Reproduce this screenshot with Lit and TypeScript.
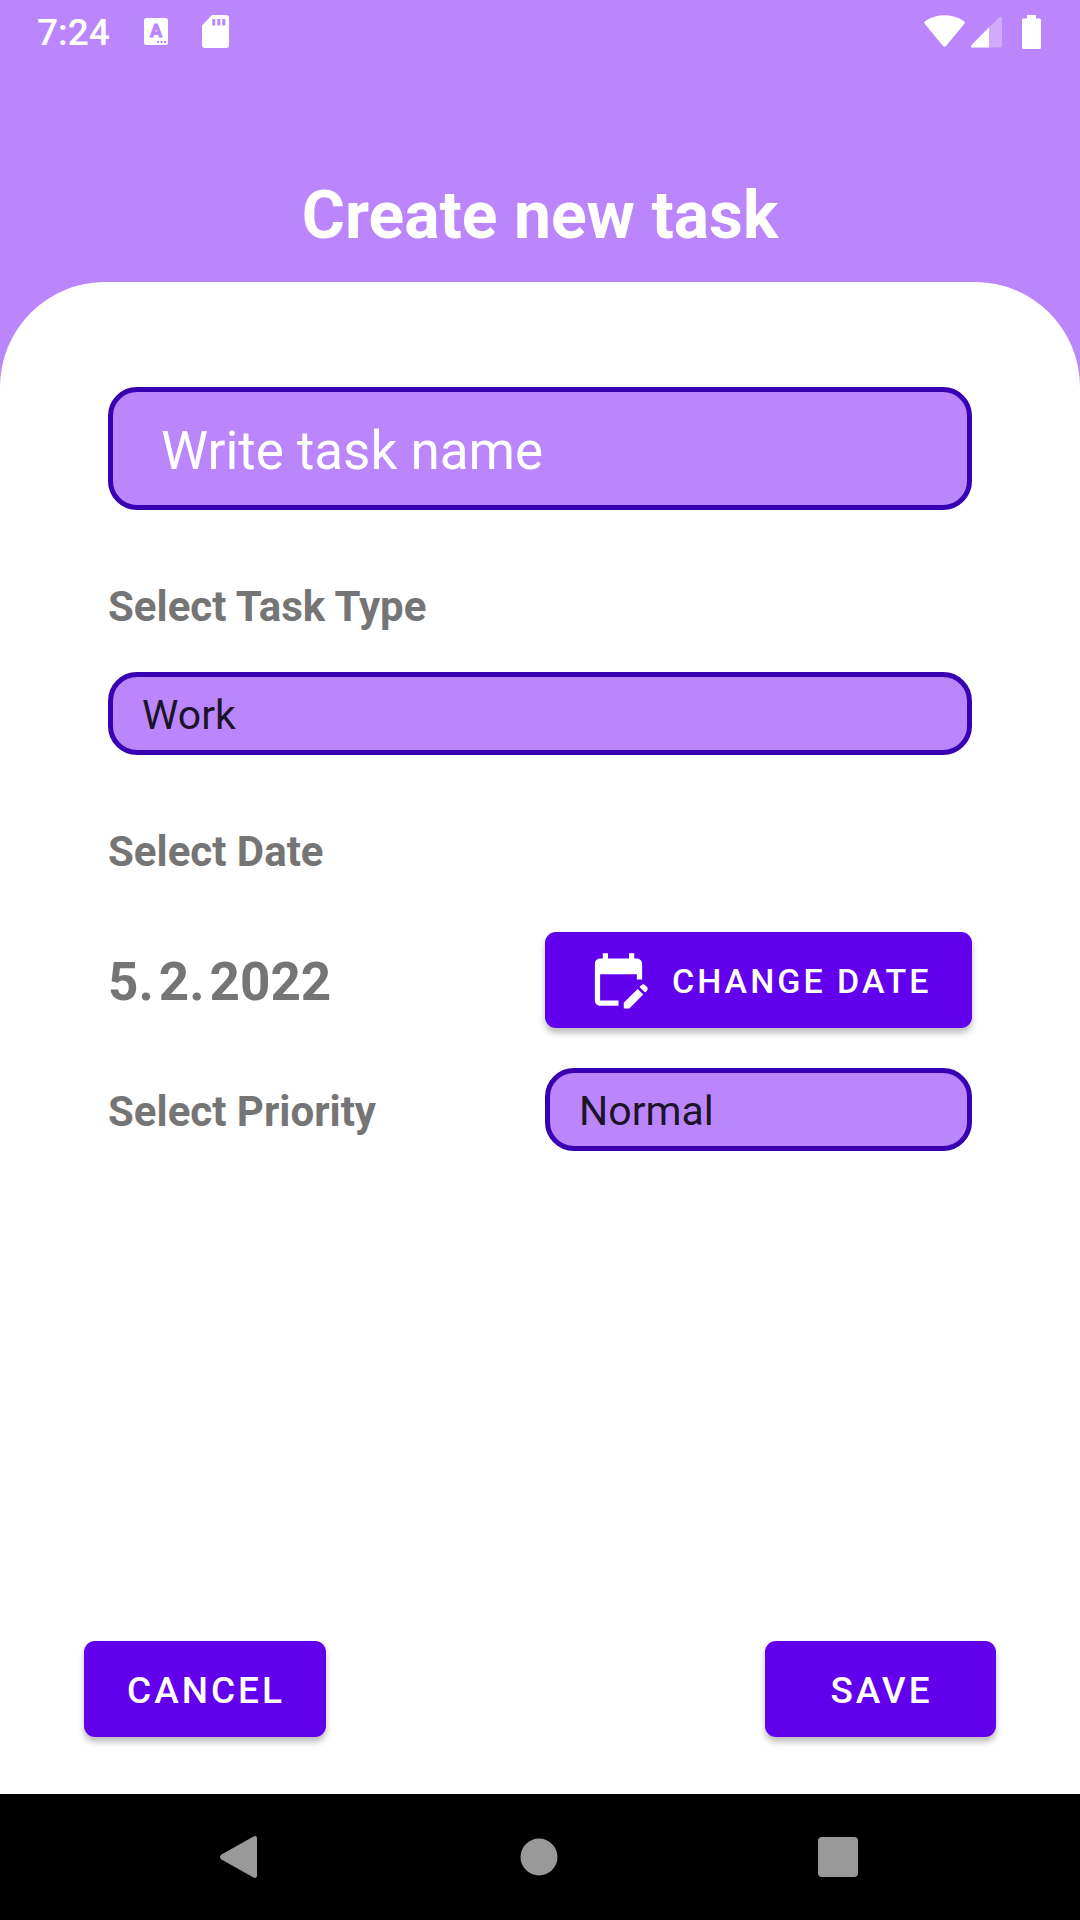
import { LitElement, html, css } from "lit";
import { customElement, state } from "lit/decorators.js";

const TASK_TYPES = ["Work", "School", "Home", "Hobby"];
const PRIORITIES = ["Low", "Normal", "High"];

@customElement("status-bar")
class StatusBar extends LitElement {
  static styles = css`
    :host {
      display: flex;
      align-items: center;
      justify-content: space-between;
      height: 63px;
      padding: 0 39px 0 37px;
      color: #fff;
    }
    .group {
      display: flex;
      align-items: center;
      gap: 34px;
    }
    .system {
      gap: 20px;
    }
    .network {
      display: flex;
      gap: 6px;
    }
    .clock {
      padding-top: 3px;
      font-size: 37px;
      line-height: 44px;
      font-weight: 500;
    }
    svg {
      display: block;
      fill: currentColor;
    }
    .letter {
      font: 700 18px Roboto, sans-serif;
      fill: #bb86fc;
      stroke: #bb86fc;
      stroke-width: 1;
    }
  `;

  render() {
    return html`
      <div class="group">
        <time class="clock">7:24</time>
        <svg width="24" height="27" viewBox="0 0 24 27" aria-hidden="true">
          <rect width="24" height="27" rx="2.5" />
          <text class="letter" x="12" y="19" text-anchor="middle">A</text>
          <path d="M13 23h2v2h-2zM16.500 23h2v2h-2zM20 23h2v2h-2z" fill="#bb86fc" />
        </svg>
        <svg width="27" height="33" viewBox="0 0 27 33" aria-hidden="true">
          <path
            fill-rule="evenodd"
            d="M10 0H24a3 3 0 0 1 3 3V30a3 3 0 0 1-3 3H3a3 3 0 0 1-3-3V10.500zM10.300 4v6.500h3V4zM15.300 4v6.500h3V4zM20.300 4v6.500h3V4z"
          />
        </svg>
      </div>
      <div class="group system">
        <div class="network">
          <svg width="41" height="33" viewBox="0 0 41 33" aria-hidden="true">
            <path
              d="M.7 8.800C-.1 7.900 0 6.900 1 6.200C7 2.200 13.500.3 20.500.3S34 2.200 40 6.200C41 6.900 41.100 7.900 40.300 8.800L22 31Q20.500 32.600 19 31z"
            />
          </svg>
          <svg width="31" height="33" viewBox="0 0 31 33" aria-hidden="true">
            <path
              d="M31 3.200V31a1.500 1.500 0 0 1-1.500 1.500H1.200C0 32.500-.4 31 .5 30L28.500 2Q31 .5 31 3.200z"
              opacity=".3"
            />
            <path d="M18 12.500V32.500H1.200C0 32.500-.4 31 .5 30z" />
          </svg>
        </div>
        <svg width="19" height="34" viewBox="0 0 19 34" aria-hidden="true">
          <path
            d="M5 0h9v3.500h3.500a1.500 1.500 0 0 1 1.500 1.500V32.500a1.500 1.500 0 0 1-1.500 1.500H1.500A1.500 1.500 0 0 1 0 32.500V5a1.500 1.500 0 0 1 1.500-1.500H5z"
          />
        </svg>
      </div>
    `;
  }
}

@customElement("navigation-bar")
class NavigationBar extends LitElement {
  static styles = css`
    :host {
      display: flex;
      align-items: center;
      justify-content: space-between;
      height: 126px;
      padding: 0 20%;
      background: #000;
    }
    .key {
      display: flex;
      padding: 0;
      border: 0;
      background: none;
      color: #999;
      cursor: pointer;
    }
    svg {
      display: block;
      fill: currentColor;
    }
  `;

  render() {
    return html`
      <button class="key" aria-label="Back">
        <svg width="44" height="44" viewBox="0 0 44 44">
          <path d="M37.500 1.500Q41 0 41 3.500V40.500Q41 44 37.500 42.500L5.500 24.500Q2.500 22 5.500 19.500z" />
        </svg>
      </button>
      <button class="key" aria-label="Home">
        <svg width="44" height="44" viewBox="0 0 44 44"><circle cx="22" cy="22" r="18.500" /></svg>
      </button>
      <button class="key" aria-label="Recent apps">
        <svg width="46" height="44" viewBox="0 0 46 44">
          <rect y="2" width="40" height="40" rx="4" />
        </svg>
      </button>
    `;
  }
}

@customElement("app-root")
class AppRoot extends LitElement {
  @state() private taskType = "Work";
  @state() private priority = "Normal";
  @state() private date = new Date(2022, 1, 5);

  static styles = css`
    :host {
      display: flex;
      flex-direction: column;
      min-height: 100vh;
      background: #bb86fc;
      font-family: Roboto, "Liberation Sans", sans-serif;
    }
    * {
      box-sizing: border-box;
    }
    .title {
      margin: 0;
      padding: 114px 0 27px;
      color: #fff;
      font-size: 66px;
      line-height: 78px;
      font-weight: 700;
      text-align: center;
    }
    .panel {
      flex: 1;
      display: flex;
      flex-direction: column;
      padding-top: 105px;
      border-radius: 105px 105px 0 0;
      background: #fff;
    }
    .fields {
      display: flex;
      flex-direction: column;
      padding: 0 10%;
      gap: 72px;
    }
    .field {
      display: flex;
      flex-direction: column;
      gap: 40px;
    }
    .date-field {
      gap: 55px;
    }
    .label {
      margin: 0;
      color: #757575;
      font-size: 42px;
      line-height: 50px;
      font-weight: 700;
    }
    .grid {
      display: grid;
      grid-template-columns: 1fr 1fr;
      align-items: center;
      gap: 40px 10px;
    }
    .grid .label,
    .date {
      padding-top: 4px;
    }
    .date {
      display: flex;
      gap: 5px;
      color: #757575;
      font-size: 53px;
      line-height: 62px;
      font-weight: 700;
    }
    .box {
      width: 100%;
      margin: 0;
      border: 5px solid #3700b3;
      border-radius: 29px;
      outline: none;
      background: #bb86fc;
      font-family: inherit;
    }
    .name {
      height: 123px;
      padding: 4px 48px 0;
      color: #fff;
      font-size: 53px;
    }
    .name::placeholder {
      color: #fff;
      opacity: 1;
    }
    .select {
      height: 83px;
      padding: 3px 29px 0;
      appearance: none;
      color: rgba(0, 0, 0, 0.87);
      font-size: 41px;
    }
    .button {
      display: flex;
      align-items: center;
      justify-content: center;
      gap: 22px;
      height: 96px;
      padding: 0 41px 0 43px;
      border: 0;
      border-radius: 11px;
      background: #6200ee;
      box-shadow: 0 5px 6px rgba(0, 0, 0, 0.26);
      color: #fff;
      font-family: inherit;
      font-size: 37px;
      font-weight: 500;
      letter-spacing: 3px;
      text-transform: uppercase;
      white-space: nowrap;
      cursor: pointer;
    }
    .caption {
      padding-top: 2px;
    }
    .change {
      justify-content: flex-start;
      padding: 0 30px 1px 42px;
      font-size: 34px;
    }
    .icon {
      flex: none;
      width: 63px;
      height: 63px;
      fill: currentColor;
    }
    .actions {
      display: flex;
      justify-content: space-between;
      margin-top: auto;
      padding: 40px 84px 57px;
    }
    .save {
      min-width: 231px;
    }
  `;

  private options(values: string[], current: string) {
    return values.map((v) => html`<option ?selected=${v === current}>${v}</option>`);
  }

  render() {
    const { date } = this;
    return html`
      <status-bar></status-bar>
      <h1 class="title">Create new task</h1>
      <main class="panel">
        <div class="fields">
          <input class="box name" type="text" placeholder="Write task name" aria-label="Task name" />
          <div class="field">
            <label class="label" for="type">Select Task Type</label>
            <select
              class="box select"
              id="type"
              @change=${(e: Event) => (this.taskType = (e.target as HTMLSelectElement).value)}
            >
              ${this.options(TASK_TYPES, this.taskType)}
            </select>
          </div>
          <div class="field date-field">
            <h2 class="label">Select Date</h2>
            <div class="grid">
              <time class="date">
                <span>${date.getDate()}.</span>
                <span>${date.getMonth() + 1}.</span>
                <span>${date.getFullYear()}</span>
              </time>
              <button class="button change">
                <svg class="icon" viewBox="0 0 24 24" aria-hidden="true">
                  <path
                    d="M12 22H5c-1.110 0-2-.9-2-2L3.010 6c0-1.100.88-2 1.990-2h1V2h2v2h8V2h2v2h1c1.100 0 2 .9 2 2v6h-2v-2H5v10h7v2zm10.130-5.010.71-.71c.39-.39.39-1.020 0-1.410l-.71-.71a.996.996 0 0 0-1.410 0l-.71.71 2.120 2.120zm-.71.71-5.300 5.300H14v-2.120l5.300-5.300 2.120 2.120z"
                  />
                </svg>
                <span class="caption">Change date</span>
              </button>
              <label class="label" for="priority">Select Priority</label>
              <select
                class="box select"
                id="priority"
                @change=${(e: Event) => (this.priority = (e.target as HTMLSelectElement).value)}
              >
                ${this.options(PRIORITIES, this.priority)}
              </select>
            </div>
          </div>
        </div>
        <div class="actions">
          <button class="button"><span class="caption">Cancel</span></button>
          <button class="button save"><span class="caption">Save</span></button>
        </div>
      </main>
      <navigation-bar></navigation-bar>
    `;
  }
}
